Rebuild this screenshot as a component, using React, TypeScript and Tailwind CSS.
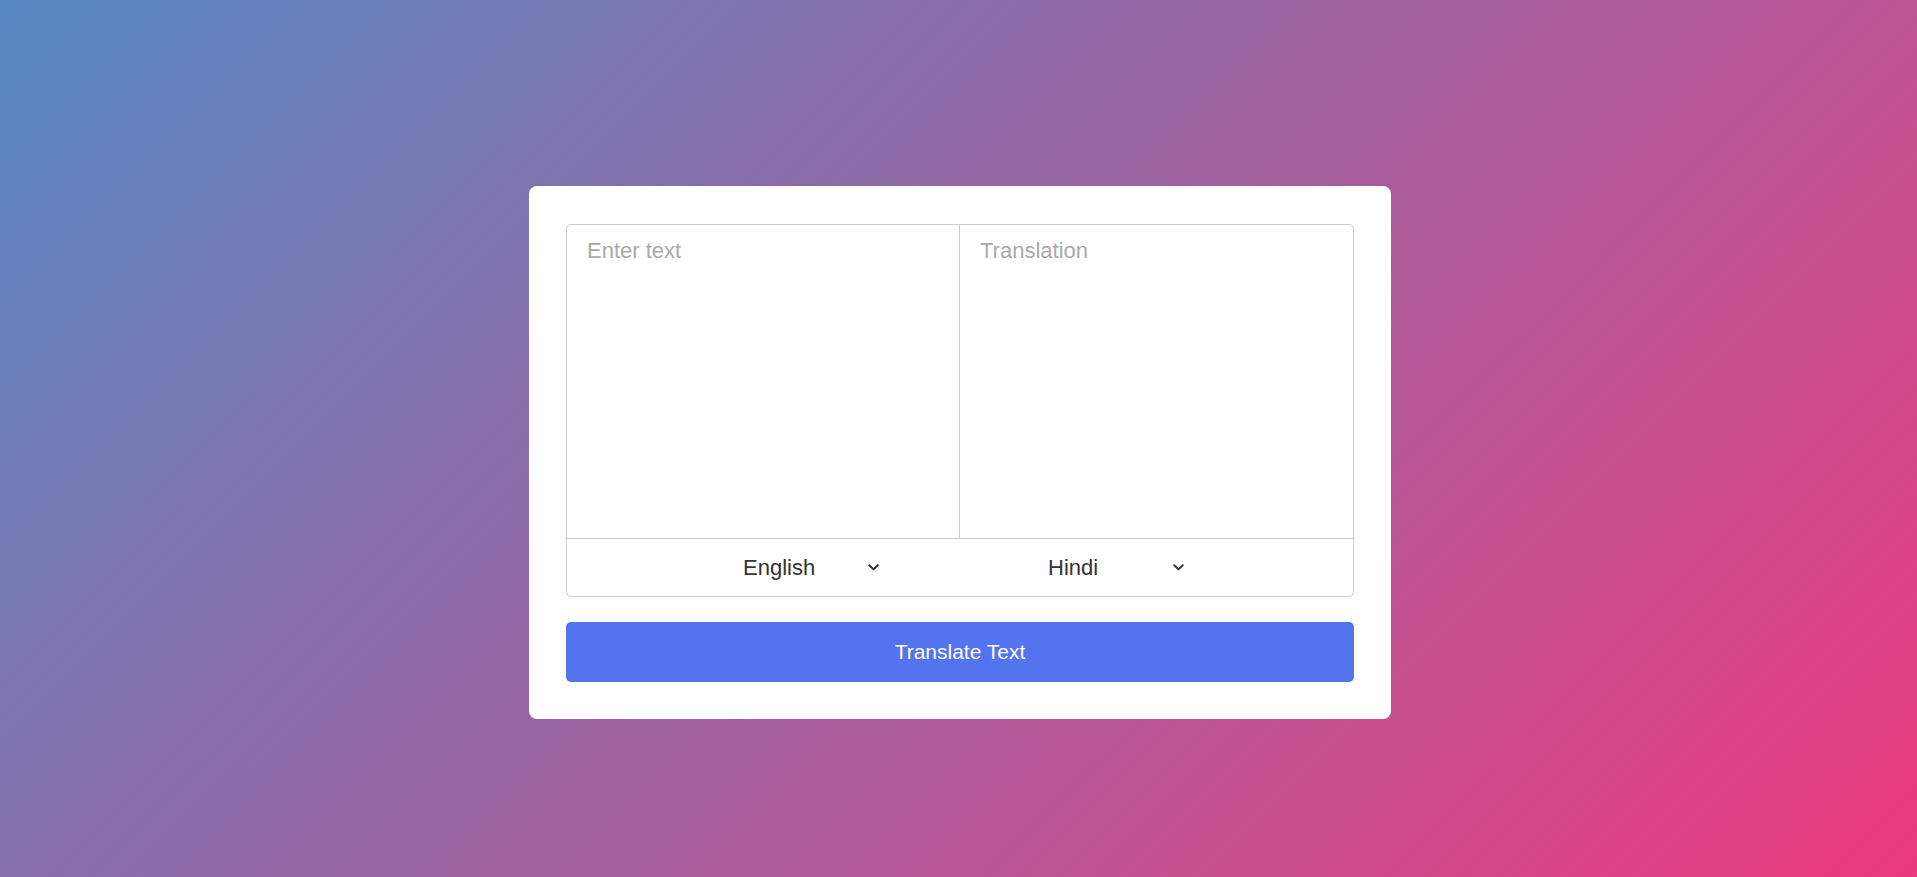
import { useState } from 'react';

const languages = ['English', 'Hindi'];

function Chevron() {
  return (
    <svg width="11" height="7" viewBox="0 0 11 7" fill="none" aria-hidden="true">
      <polyline points="1.2,1.2 5.5,5.4 9.8,1.2" stroke="#333" strokeWidth="1.9" strokeLinecap="round" strokeLinejoin="round" />
    </svg>
  );
}

function LangPicker({ value }: { value: string }) {
  return (
    <div className="flex w-[136px] items-center justify-between text-[22px] leading-[1.15] text-[#333]">
      <span>{value}</span>
      <Chevron />
    </div>
  );
}

export default function App() {
  const [text, setText] = useState('');
  const [from] = useState(languages[0]);
  const [to] = useState(languages[1]);

  return (
    <div
      className="flex min-h-[877px] w-full justify-center bg-[linear-gradient(135deg,#5689c2_0%,#a0619f_50%,#ec3b7e_100%)] pl-[3px] pt-[186px]"
      style={{ fontFamily: '"Liberation Sans", Arial, sans-serif' }}
    >
      <div className="h-[533px] w-[862px] rounded-[8px] bg-white pb-[37px] pl-[37px] pr-[37px] pt-[38px]">
        <div className="overflow-hidden rounded-[5px] border border-[#cccccc]">
          <div className="grid h-[314px] grid-cols-2 border-b border-[#cccccc]">
            <textarea
              value={text}
              onChange={(e) => setText(e.target.value)}
              placeholder="Enter text"
              className="h-full resize-none border-r border-[#cccccc] pl-[20px] pr-[20px] pt-[13px] text-[22px] leading-[1.15] text-[#333] outline-none placeholder:text-[#aaaaaa]"
            />
            <textarea
              readOnly
              placeholder="Translation"
              className="h-full resize-none pl-[20px] pr-[20px] pt-[13px] text-[22px] leading-[1.15] text-[#333] outline-none placeholder:text-[#aaaaaa]"
            />
          </div>
          <div className="flex h-[57px] items-center gap-[169px] pl-[176px]">
            <LangPicker value={from} />
            <LangPicker value={to} />
          </div>
        </div>
        <button
          type="button"
          className="mt-[25px] h-[60px] w-full rounded-[5px] bg-[#5473ee] text-[21px] text-white"
        >
          Translate Text
        </button>
      </div>
    </div>
  );
}
